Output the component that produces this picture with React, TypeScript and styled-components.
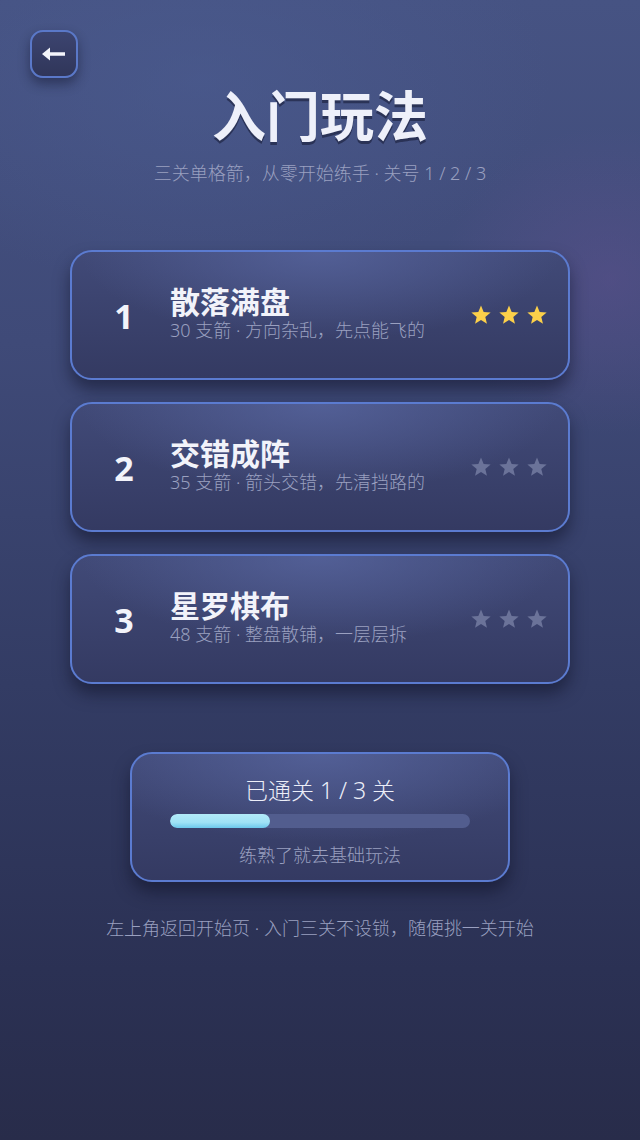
import React from "react";
import styled, { createGlobalStyle } from "styled-components";

const GlobalStyle = createGlobalStyle`
  html, body { margin: 0; padding: 0; }
  body {
    font-family: "Noto Sans", "Noto Sans CJK SC", sans-serif;
    background: #2b3152;
  }
`;

const Page = styled.div`
  position: relative;
  width: 640px;
  height: 1140px;
  overflow: hidden;
  box-sizing: border-box;
  padding: 30px 30px 0;
  display: flex;
  flex-direction: column;
  background:
    radial-gradient(ellipse 240px 220px at 610px 280px, rgba(92, 80, 140, 0.55), transparent 70%),
    radial-gradient(ellipse 500px 300px at 200px 80px, rgba(75, 92, 145, 0.6), transparent 70%),
    linear-gradient(180deg, #465383 0%, #3f4a78 30%, #333c64 60%, #2b3154 85%, #282c4a 100%);
`;

const BackButton = styled.button`
  width: 48px;
  height: 48px;
  border-radius: 13px;
  border: 2px solid #5a78c8;
  background: linear-gradient(180deg, #3c4470 0%, #30365a 100%);
  box-shadow: 0 6px 12px rgba(15, 18, 40, 0.45);
  display: flex;
  align-items: center;
  justify-content: center;
  padding: 0;
  cursor: pointer;
`;

const Title = styled.h1`
  margin: 4px 0 0;
  text-align: center;
  font-family: "Noto Sans CJK SC", sans-serif;
  font-weight: 700;
  font-size: 54px;
  line-height: 64px;
  color: #eef0fa;
  text-shadow: 0 3px 0 rgba(20, 24, 50, 0.55);
`;

const Subtitle = styled.p`
  margin: 15px 0 0;
  text-align: center;
  font-size: 18px;
  font-weight: 300;
  line-height: 24px;
  color: #9aa0c0;
`;

const List = styled.div`
  margin: 65px auto 0;
  display: flex;
  flex-direction: column;
  gap: 22px;
`;

const Panel = styled.div<{ $width: number }>`
  box-sizing: border-box;
  width: ${(p) => p.$width}px;
  height: 130px;
  border-radius: 22px;
  border: 2px solid #5b7bd0;
  background:
    radial-gradient(ellipse 300px 110px at 50% 0%, rgba(88, 102, 160, 0.75), transparent 80%),
    linear-gradient(180deg, #414a78 0%, #343a62 100%);
  box-shadow: 0 10px 16px rgba(14, 16, 36, 0.5);
`;

const LevelCard = styled(Panel)`
  display: flex;
  align-items: center;
  padding: 0 20px 0 0;
`;

const Num = styled.div`
  box-sizing: border-box;
  width: 98px;
  padding-left: 6px;
  text-align: center;
  font-size: 34px;
  font-weight: 700;
  color: #f2f3fa;
  margin-top: 2px;
`;

const Info = styled.div`
  flex: 1;
  display: flex;
  flex-direction: column;
  margin-top: -6px;
`;

const LevelName = styled.div`
  font-family: "Noto Sans CJK SC", sans-serif;
  font-size: 30px;
  font-weight: 700;
  line-height: 36px;
  color: #f2f3fa;
`;

const LevelDesc = styled.div`
  font-size: 18px;
  font-weight: 300;
  line-height: 24px;
  color: #9aa0c0;
`;

const Stars = styled.div`
  display: flex;
  gap: 6px;
`;

const StatusCard = styled(Panel)`
  margin: 68px auto 0;
  display: flex;
  flex-direction: column;
  align-items: center;
  padding-top: 20px;
`;

const StatusText = styled.div`
  font-size: 23px;
  font-weight: 300;
  line-height: 32px;
  color: #eceef8;
`;

const Track = styled.div`
  margin-top: 8px;
  width: 300px;
  height: 14px;
  border-radius: 7px;
  background: #525d8e;
  overflow: hidden;
`;

const Fill = styled.div`
  height: 100%;
  border-radius: 7px;
  background: linear-gradient(180deg, #b2eaf8 0%, #9fe2f6 60%, #6cc8ec 100%);
`;

const Hint = styled.div`
  margin-top: 15px;
  font-size: 18px;
  font-weight: 300;
  line-height: 24px;
  color: #9aa0c0;
`;

const Footer = styled.p`
  margin: 34px 0 0;
  text-align: center;
  font-size: 18px;
  font-weight: 300;
  line-height: 24px;
  color: #9aa0c0;
`;

const Star = ({ on }: { on: boolean }) => (
  <svg width="22" height="22" viewBox="0 0 24 24">
    <polygon
      points="12,1.5 14.9,8.6 22.5,9.2 16.7,14.1 18.5,21.5 12,17.5 5.5,21.5 7.3,14.1 1.5,9.2 9.1,8.6"
      fill={on ? "#fcd04a" : "#6b7399"}
    />
  </svg>
);

const levels = [
  { n: 1, name: "散落满盘", desc: "30 支箭 · 方向杂乱，先点能飞的", stars: 3 },
  { n: 2, name: "交错成阵", desc: "35 支箭 · 箭头交错，先清挡路的", stars: 0 },
  { n: 3, name: "星罗棋布", desc: "48 支箭 · 整盘散铺，一层层拆", stars: 0 },
];

export default function App() {
  const done = 1;
  const total = 3;
  return (
    <>
      <GlobalStyle />
      <Page>
        <BackButton aria-label="返回">
          <svg width="26" height="16" viewBox="0 0 26 16">
            <path d="M1 8 L9 1.5 L9 6.3 L24 6.3 L24 9.7 L9 9.7 L9 14.5 Z" fill="#f4f5fb" />
          </svg>
        </BackButton>
        <Title>入门玩法</Title>
        <Subtitle>三关单格箭，从零开始练手 · 关号 1 / 2 / 3</Subtitle>
        <List>
          {levels.map((l) => (
            <LevelCard key={l.n} $width={500}>
              <Num>{l.n}</Num>
              <Info>
                <LevelName>{l.name}</LevelName>
                <LevelDesc>{l.desc}</LevelDesc>
              </Info>
              <Stars>
                {[0, 1, 2].map((i) => (
                  <Star key={i} on={i < l.stars} />
                ))}
              </Stars>
            </LevelCard>
          ))}
        </List>
        <StatusCard $width={380}>
          <StatusText>已通关 {done} / {total} 关</StatusText>
          <Track>
            <Fill style={{ width: `${(done / total) * 100}%` }} />
          </Track>
          <Hint>练熟了就去基础玩法</Hint>
        </StatusCard>
        <Footer>左上角返回开始页 · 入门三关不设锁，随便挑一关开始</Footer>
      </Page>
    </>
  );
}
